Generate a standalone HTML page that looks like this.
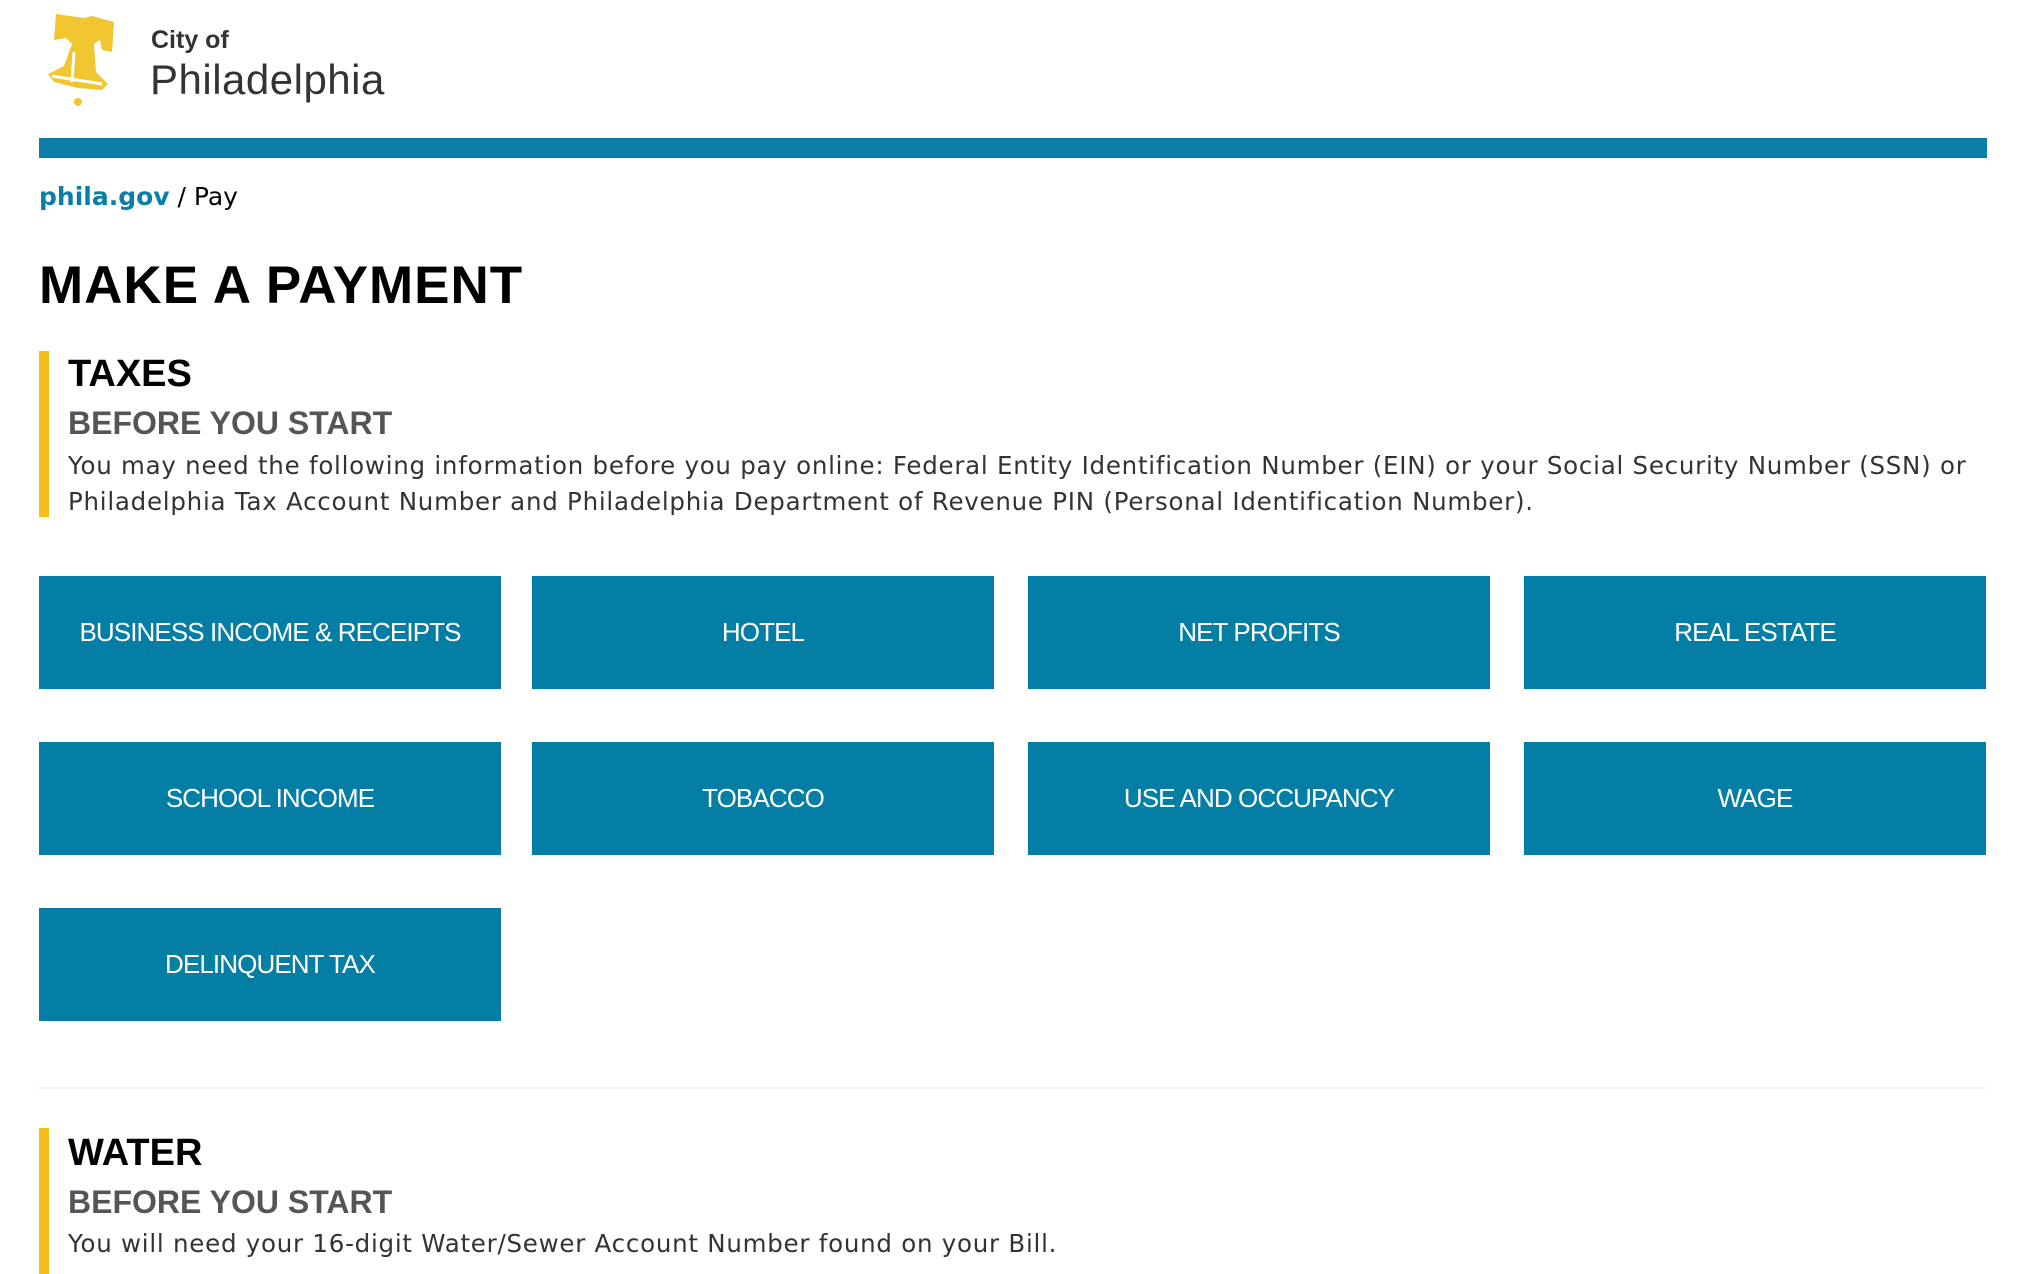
<!DOCTYPE html>
<html><head><meta charset="utf-8"><style>
*{margin:0;padding:0;box-sizing:border-box}
body{width:2022px;height:1274px;overflow:hidden;background:#fff;font-family:"Liberation Sans",sans-serif;color:#000;position:relative}
.abs{position:absolute}
.bar{left:39px;top:138px;width:1948px;height:20px;background:#0a7ea7}
.crumb{left:39px;top:182px;font-size:25px;font-family:"DejaVu Sans",sans-serif}
.crumb b{color:#0a7ea7}
h1{position:absolute;left:39px;top:255px;font-size:53px;font-weight:bold;letter-spacing:1px}
.sec{position:absolute;left:39px;border-left:10px solid #f3c01a;padding-left:19px}
.sec h2{font-size:38px;font-weight:bold;line-height:46px}
.sec h3{font-size:32px;font-weight:bold;color:#555;line-height:44px;margin-top:4px}
.sec p{font-family:"DejaVu Sans",sans-serif;font-size:24.5px;line-height:36px;color:#333;letter-spacing:0.75px;margin-top:3px}
.btn{position:absolute;width:462px;height:113px;background:#057ea6;color:#fff;font-size:26px;display:flex;align-items:center;justify-content:center;letter-spacing:-0.9px}
.hr{left:39px;top:1087px;width:1948px;height:2px;background:#eef2f4}
</style></head><body>
<svg class="abs" style="left:44px;top:12px" width="84" height="98" viewBox="0 0 84 98">
<path d="M12 2 L40 6 L48 4 L70 10 L68 40 L58 38 L56 28 L50 32 L52 60 L64 72 L58 78 L34 76 L10 70 L4 62 L20 54 L28 32 L22 26 L10 28 Z" fill="#f2c630"/>
<path d="M8 64 L58 72" stroke="#fff" stroke-width="3" fill="none"/>
<path d="M30 40 L28 70" stroke="#fff" stroke-width="3" fill="none"/>
<circle cx="34" cy="90" r="4" fill="#f2c630"/>
</svg>
<div class="abs" style="left:151px;top:26px;font-size:25px;color:#333;font-weight:bold">City of</div>
<div class="abs" style="left:150px;top:56px;font-size:42px;color:#333;letter-spacing:0.5px">Philadelphia</div>
<div class="abs bar"></div>
<div class="abs crumb"><b>phila.gov</b> / Pay</div>
<h1>MAKE A PAYMENT</h1>
<div class="sec" style="top:351px;height:166px">
<h2 style="margin-top:0px">TAXES</h2>
<h3>BEFORE YOU START</h3>
<p>You may need the following information before you pay online: Federal Entity Identification Number (EIN) or your Social Security Number (SSN) or Philadelphia Tax Account Number and Philadelphia Department of Revenue PIN (Personal Identification Number).</p>
</div>
<div class="btn" style="left:39px;top:576px">BUSINESS INCOME &amp; RECEIPTS</div>
<div class="btn" style="left:532px;top:576px">HOTEL</div>
<div class="btn" style="left:1028px;top:576px">NET PROFITS</div>
<div class="btn" style="left:1524px;top:576px">REAL ESTATE</div>
<div class="btn" style="left:39px;top:742px">SCHOOL INCOME</div>
<div class="btn" style="left:532px;top:742px">TOBACCO</div>
<div class="btn" style="left:1028px;top:742px">USE AND OCCUPANCY</div>
<div class="btn" style="left:1524px;top:742px">WAGE</div>
<div class="btn" style="left:39px;top:908px">DELINQUENT TAX</div>
<div class="abs hr"></div>
<div class="sec" style="top:1128px;height:146px">
<h2 style="margin-top:2px">WATER</h2>
<h3>BEFORE YOU START</h3>
<p style="margin-top:2px">You will need your 16-digit Water/Sewer Account Number found on your Bill.</p>
</div>
</body></html>
